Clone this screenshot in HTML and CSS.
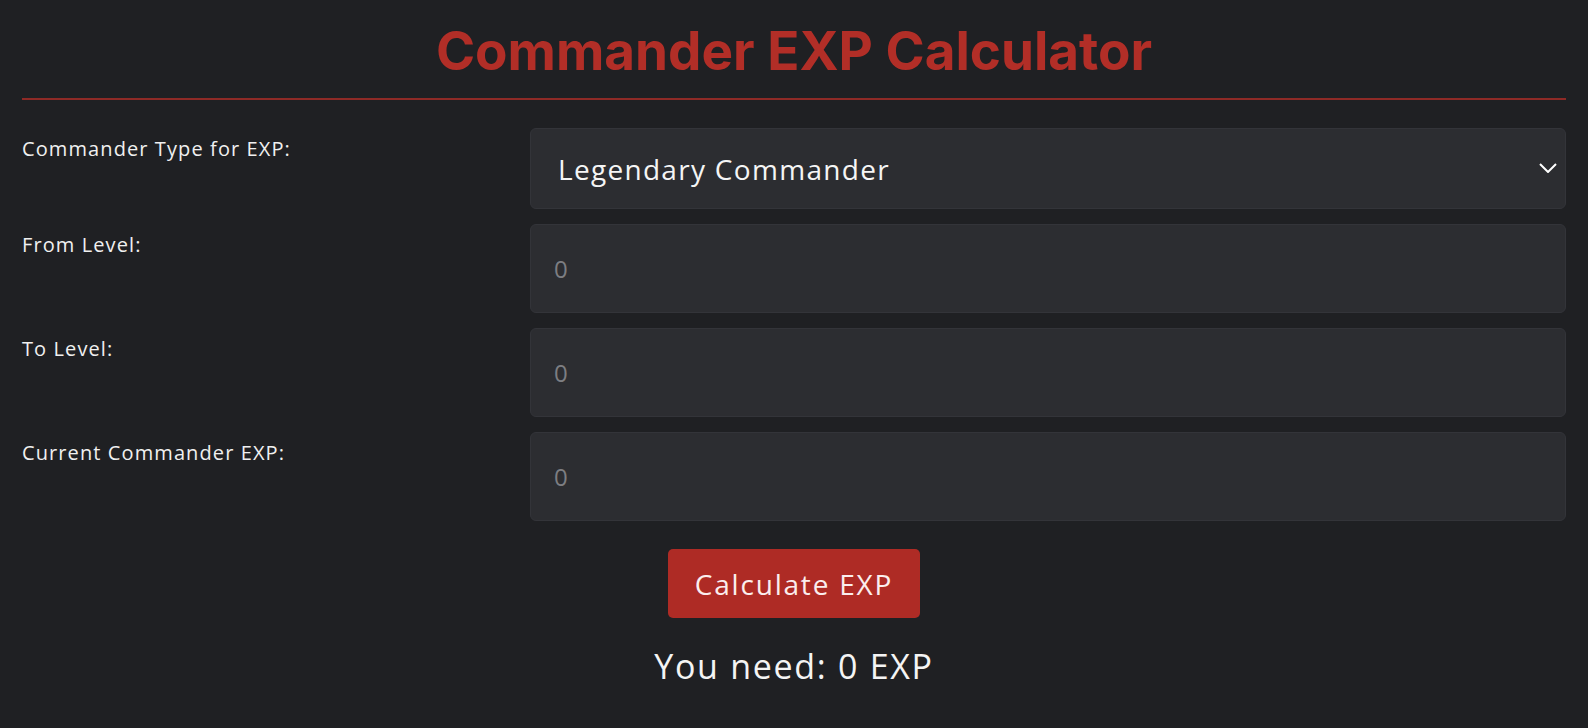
FILE: index.html
```html
<!DOCTYPE html>
<html lang="en">
<head>
<meta charset="utf-8">
<title>Commander EXP Calculator</title>
<link rel="stylesheet" href="styles.css">
</head>
<body>
<div class="page">
  <h1 class="title">Commander EXP Calculator</h1>
  <form class="calc" onsubmit="return false">
    <label class="label">Commander Type for EXP:</label>
    <div class="select-wrap">
      <div class="select">Legendary Commander</div>
      <svg class="chev" width="18" height="10" viewBox="0 0 18 10"><path d="M1 1 L9 9 L17 1" fill="none" stroke="#ffffff" stroke-width="2"/></svg>
    </div>
    <label class="label">From Level:</label>
    <div class="input"><span class="ph">0</span></div>
    <label class="label">To Level:</label>
    <div class="input"><span class="ph">0</span></div>
    <label class="label">Current Commander EXP:</label>
    <div class="input"><span class="ph">0</span></div>
  </form>
  <div class="actions">
    <button class="btn" type="button">Calculate EXP</button>
    <p class="result">You need: 0 EXP</p>
  </div>
</div>
</body>
</html>
```
FILE: styles.css
```css
html, body {
  margin: 0;
  padding: 0;
  background: #1f2023;
  color: #f2f2f2;
  font-family: "Open Sans", "Noto Sans", sans-serif;
}
.page {
  padding: 0 22px;
}
.title {
  margin: 0;
  padding: 20px 0 16px;
  text-align: center;
  font-family: "Inter", "Liberation Sans", sans-serif;
  font-weight: 700;
  font-size: 53px;
  line-height: 62px;
  color: #b22e27;
  border-bottom: 2px solid #8e2a26;
}
.calc {
  display: grid;
  grid-template-columns: 508px 1fr;
  row-gap: 15px;
  margin-top: 28px;
}
.label {
  font-size: 20px;
  letter-spacing: 1.1px;
  line-height: 26px;
  padding-top: 8px;
  color: #f0f0f0;
}
.select-wrap {
  position: relative;
  height: 81px;
  background: #2c2d31;
  border: 1px solid #333439;
  border-radius: 6px;
  box-sizing: border-box;
  display: flex;
  align-items: center;
}
.select {
  padding-left: 27px;
  font-size: 28px;
  letter-spacing: 1.3px;
  color: #f5f5f5;
}
.chev {
  position: absolute;
  right: 8px;
  top: 34px;
}
.input {
  height: 89px;
  background: #2c2d31;
  border: 1px solid #333439;
  border-radius: 6px;
  box-sizing: border-box;
  display: flex;
  align-items: center;
  padding-left: 23px;
}
.ph {
  font-size: 24px;
  color: #7d7e82;
}
.actions {
  display: flex;
  flex-direction: column;
  align-items: center;
  margin-top: 28px;
}
.btn {
  width: 252px;
  height: 69px;
  border: none;
  border-radius: 5px;
  background: #ae2b25;
  color: #fbeeee;
  font-family: "Open Sans", "Noto Sans", sans-serif;
  font-size: 28px;
  letter-spacing: 1.8px;
  cursor: pointer;
}
.result {
  margin: 28px 0 0;
  font-size: 34px;
  letter-spacing: 1.7px;
  line-height: 40px;
  color: #f4f4f4;
}
```
